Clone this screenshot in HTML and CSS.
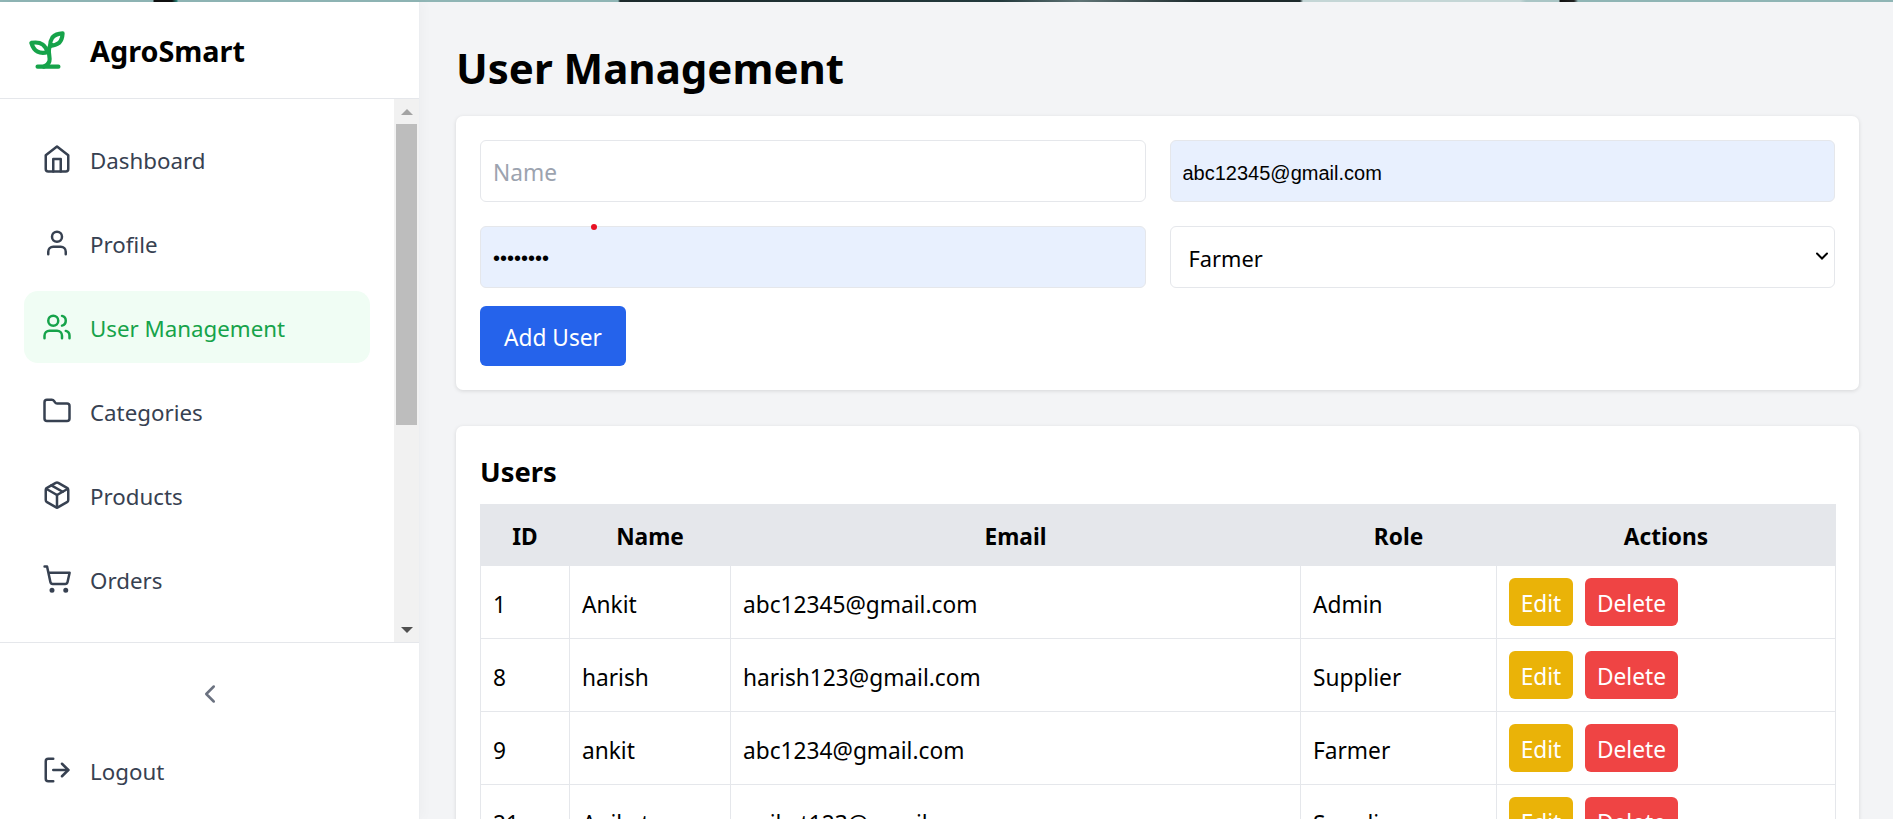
FILE: index.html
```html
<!DOCTYPE html>
<html lang="en">
<head>
<meta charset="utf-8">
<title>AgroSmart - User Management</title>
<link rel="stylesheet" href="styles.css">
</head>
<body>
<div class="top-strip"></div>
<div class="app">
  <aside class="sidebar">
    <div class="brand">
      <svg class="brand-icon" viewBox="0 0 24 24"><path d="M7 20h10"/><path d="M10 20c5.5-2.5.8-6.4 3-10"/><path d="M9.5 9.4c1.1.8 1.8 2.2 2.3 3.7-2 .4-3.5.4-4.8-.3-1.2-.6-2.3-1.9-3-4.2 2.8-.5 4.4 0 5.5.8z"/><path d="M14.1 6a7 7 0 0 0-1.1 4c1.9-.1 3.3-.6 4.3-1.4 1-1 1.6-2.3 1.7-4.6-2.7.1-4 1-4.9 2z"/></svg>
      <span class="brand-name">AgroSmart</span>
    </div>
    <div class="nav-wrap">
      <nav class="nav">
        <a class="nav-item"><svg class="icon" viewBox="0 0 24 24"><path d="M3 9l9-7 9 7v11a2 2 0 0 1-2 2H5a2 2 0 0 1-2-2z"/><path d="M9 22V12h6v10"/></svg><span>Dashboard</span></a>
        <a class="nav-item"><svg class="icon" viewBox="0 0 24 24"><path d="M19 21v-2a4 4 0 0 0-4-4H9a4 4 0 0 0-4 4v2"/><circle cx="12" cy="7" r="4"/></svg><span>Profile</span></a>
        <a class="nav-item active"><svg class="icon" viewBox="0 0 24 24"><path d="M16 21v-2a4 4 0 0 0-4-4H6a4 4 0 0 0-4 4v2"/><circle cx="9" cy="7" r="4"/><path d="M22 21v-2a4 4 0 0 0-3-3.87"/><path d="M16 3.13a4 4 0 0 1 0 7.75"/></svg><span>User Management</span></a>
        <a class="nav-item"><svg class="icon" viewBox="0 0 24 24"><path d="M20 20a2 2 0 0 0 2-2V8a2 2 0 0 0-2-2h-7.9a2 2 0 0 1-1.69-.9L9.6 3.9A2 2 0 0 0 7.93 3H4a2 2 0 0 0-2 2v13a2 2 0 0 0 2 2Z"/></svg><span>Categories</span></a>
        <a class="nav-item"><svg class="icon" viewBox="0 0 24 24"><path d="m7.5 4.27 9 5.15"/><path d="M21 8a2 2 0 0 0-1-1.73l-7-4a2 2 0 0 0-2 0l-7 4A2 2 0 0 0 3 8v8a2 2 0 0 0 1 1.73l7 4a2 2 0 0 0 2 0l7-4A2 2 0 0 0 21 16Z"/><path d="m3.3 7 8.7 5 8.7-5"/><path d="M12 22V12"/></svg><span>Products</span></a>
        <a class="nav-item"><svg class="icon" viewBox="0 0 24 24"><circle cx="8" cy="21" r="1"/><circle cx="19" cy="21" r="1"/><path d="M2.05 2.05h2l2.66 12.42a2 2 0 0 0 2 1.58h9.78a2 2 0 0 0 1.95-1.57l1.65-7.43H5.12"/></svg><span>Orders</span></a>
      </nav>
      <div class="scrollbar">
        <span class="arrow arrow-up"></span>
        <span class="thumb"></span>
        <span class="arrow arrow-down"></span>
      </div>
    </div>
    <div class="side-foot">
      <button class="collapse"><svg class="icon icon-grey" viewBox="0 0 24 24"><path d="m15 18-6-6 6-6"/></svg></button>
      <a class="nav-item"><svg class="icon" viewBox="0 0 24 24"><path d="M9 21H5a2 2 0 0 1-2-2V5a2 2 0 0 1 2-2h4"/><path d="m16 17 5-5-5-5"/><path d="M21 12H9"/></svg><span>Logout</span></a>
    </div>
  </aside>
  <main class="main">
    <h1 class="title">User Management</h1>
    <section class="card">
      <form class="form-grid">
        <input class="field" type="text" placeholder="Name">
        <input class="field autofill" type="email" value="abc12345@gmail.com">
        <div class="field-wrap">
          <input class="field autofill" type="password" value="abcd1234">
          <span class="dot"></span>
        </div>
        <div class="field-wrap">
          <select class="field select"><option>Farmer</option><option>Admin</option><option>Supplier</option></select>
          <svg class="select-arrow" viewBox="0 0 12 8"><path d="M1 1.5l5 5 5-5"/></svg>
        </div>
      </form>
      <button class="btn btn-add">Add User</button>
    </section>
    <section class="card card-users">
      <h2 class="subtitle">Users</h2>
      <table class="table">
        <colgroup><col class="c-id"><col class="c-name"><col class="c-email"><col class="c-role"><col class="c-act"></colgroup>
        <thead><tr><th>ID</th><th>Name</th><th>Email</th><th>Role</th><th>Actions</th></tr></thead>
        <tbody>
          <tr><td>1</td><td>Ankit</td><td>abc12345@gmail.com</td><td>Admin</td><td class="cell-actions"><div class="actions"><button class="btn btn-small btn-edit">Edit</button><button class="btn btn-small btn-del">Delete</button></div></td></tr>
          <tr><td>8</td><td>harish</td><td>harish123@gmail.com</td><td>Supplier</td><td class="cell-actions"><div class="actions"><button class="btn btn-small btn-edit">Edit</button><button class="btn btn-small btn-del">Delete</button></div></td></tr>
          <tr><td>9</td><td>ankit</td><td>abc1234@gmail.com</td><td>Farmer</td><td class="cell-actions"><div class="actions"><button class="btn btn-small btn-edit">Edit</button><button class="btn btn-small btn-del">Delete</button></div></td></tr>
          <tr><td>21</td><td>Aniket</td><td>aniket123@gmail.com</td><td>Supplier</td><td class="cell-actions"><div class="actions"><button class="btn btn-small btn-edit">Edit</button><button class="btn btn-small btn-del">Delete</button></div></td></tr>
        </tbody>
      </table>
    </section>
  </main>
</div>
</body>
</html>
```
FILE: styles.css
```css
* { box-sizing: border-box; }
html, body { margin: 0; height: 100%; overflow: hidden; }
body {
  display: flex;
  flex-direction: column;
  background: #f3f4f6;
  color: #000;
  font-family: "Noto Sans", "Open Sans", sans-serif;
  font-size: 22.7px;
}
.top-strip {
  flex: none;
  height: 2px;
  background: linear-gradient(90deg,
    #8fb5b5 0, #8fb5b5 153px, #111 154px, #111 172px, #2a8a80 177px, #8fb5b5 178px,
    #8fb5b5 618px, #1c2a2c 620px, #22393c 1000px, #5f7476 1080px, #1c2a2c 1200px, #1c2a2c 1300px,
    #c4d6d6 1303px, #c4d6d6 1520px, #a9c5c5 1526px, #a9c5c5 1559px, #111 1560px, #222 1574px, #8fb5b5 1578px, #8fb5b5 100%);
}
.app { flex: 1; display: flex; min-height: 0; }

.sidebar {
  flex: none;
  width: 420px;
  display: flex;
  flex-direction: column;
  background: #fff;
  border-right: 1px solid #eceef1;
  box-shadow: 4px 0 10px rgba(0,0,0,.025);
}
.brand {
  flex: none;
  height: 97px;
  display: flex;
  align-items: center;
  padding-left: 23px;
  gap: 17px;
  border-bottom: 1px solid #e5e7eb;
}
.brand-icon {
  width: 50px; height: 50px;
  fill: none; stroke: #16a34a; stroke-width: 2; stroke-linecap: round; stroke-linejoin: round;
}
.brand-name { font-size: 28.8px; font-weight: 700; }

.nav-wrap { flex: 1; min-height: 0; display: flex; }
.nav { flex: 1; display: flex; flex-direction: column; gap: 12px; padding: 24px 24px 0; }
.nav-item {
  height: 72px;
  display: flex;
  align-items: center;
  gap: 18px;
  padding-left: 18px;
  border-radius: 14px;
  color: #374151;
  font-size: 22.3px;
}
.nav-item span { padding-top: 2px; }
.nav-item.active { background: #f0fdf4; color: #16a34a; }
.icon {
  flex: none;
  width: 30px; height: 30px;
  fill: none; stroke: currentColor; stroke-width: 2; stroke-linecap: round; stroke-linejoin: round;
}
.icon-grey { color: #6b7280; }

.scrollbar {
  flex: none;
  width: 25px;
  display: flex;
  flex-direction: column;
  align-items: center;
  background: #f1f1f1;
  padding: 10px 0 9px;
}
.arrow { width: 0; height: 0; border-left: 6px solid transparent; border-right: 6px solid transparent; }
.arrow-up { border-bottom: 6px solid #a3a3a3; }
.arrow-down { border-top: 6px solid #505050; margin-top: auto; }
.thumb { width: 21px; height: 301px; margin-top: 9px; background: #bdbdbd; }

.side-foot {
  flex: none;
  height: 177px;
  border-top: 1px solid #e5e7eb;
  padding: 36px 24px 0;
  display: flex;
  flex-direction: column;
  gap: 25px;
}
.collapse {
  align-self: center;
  display: flex;
  padding: 0;
  border: 0;
  background: none;
}

.main { flex: 1; min-width: 0; padding: 42px 34px 0 36px; }
.title { margin: 0 0 24px; font-size: 42px; line-height: 48px; font-weight: 700; }
.card {
  background: #fff;
  border-radius: 7px;
  padding: 24px;
  box-shadow: 0 1px 4px rgba(0,0,0,.12);
}
.card-users { margin-top: 36px; }
.form-grid { display: grid; grid-template-columns: 1fr 1fr; gap: 24px; }
.field-wrap { position: relative; display: flex; }
.field {
  width: 100%;
  height: 62px;
  padding: 2px 12px 0;
  border: 1px solid #e5e7eb;
  border-radius: 6px;
  background: #fff;
  color: #000;
  font-family: inherit;
  font-size: 22.7px;
  outline: none;
}
.field::placeholder { color: #9ca3af; opacity: 1; }
.autofill { padding-top: 4px; background: #e8f0fe; font-family: "Liberation Sans", Arial, sans-serif; font-size: 20px; }
.field-wrap .autofill { padding-top: 2px; }
.select { appearance: none; padding-left: 18px; font-size: 21.8px; }
.select-arrow {
  position: absolute; right: 7px; top: 26px; width: 12px; height: 8px;
  fill: none; stroke: #000; stroke-width: 2; stroke-linecap: round; pointer-events: none;
}
.dot { position: absolute; left: 111px; top: -2px; width: 6px; height: 6px; border-radius: 50%; background: #e81123; }
.btn {
  border: 0;
  border-radius: 6px;
  color: #fff;
  font-family: inherit;
  font-size: 22.7px;
  padding: 2px 0 0;
}
.btn-add { display: block; width: 146px; height: 60px; margin-top: 18px; background: #2563eb; }

.subtitle { margin: 0 0 10px; font-size: 27.4px; line-height: 44px; font-weight: 700; }
.table { width: 100%; table-layout: fixed; border-collapse: collapse; }
.c-id { width: 89px; }
.c-name { width: 161px; }
.c-email { width: 570px; }
.c-role { width: 196px; }
.c-act { width: 339px; }
th {
  height: 61px;
  background: #e5e7eb;
  border: 1px solid #e5e7eb;
  font-weight: 700;
  text-align: center;
  padding: 3px 12px 0;
}
td {
  border: 1px solid #e5e7eb;
  padding: 14px 12px 10px;
  height: 73px;
}
td.cell-actions { padding: 12px; }
.actions { display: flex; gap: 12px; }
.btn-small { height: 48px; }
.btn-edit { width: 64px; background: #eab308; }
.btn-del { width: 93px; background: #ef4444; }
```
